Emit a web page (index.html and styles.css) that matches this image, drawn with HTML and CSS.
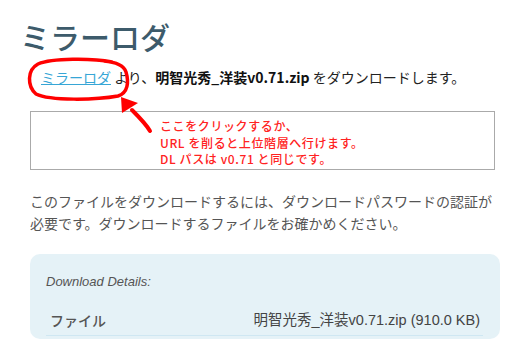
FILE: index.html
```html
<!DOCTYPE html>
<html lang="ja">
<head>
    <meta charset="UTF-8">
    <meta name="viewport" content="width=device-width, initial-scale=1.0">
    <title>ミラーロダ</title>
    <link rel="stylesheet" href="styles.css">
</head>
<body>

    <div class="page">
        <h1 class="site-title">ミラーロダ</h1>

        <div class="intro">
            <a href="#" class="mirror-link">ミラーロダ</a> より、<b>明智光秀_洋装v0.71.zip</b> をダウンロードします。
        </div>

        <div class="note-box">
            <div class="note-text">
                ここをクリックするか、<br>
                URL を削ると上位階層へ行けます。<br>
                DL パスは v0.71 と同じです。
            </div>
        </div>

        <p class="desc">
            このファイルをダウンロードするには、ダウンロードパスワードの認証が<br>
            必要です。ダウンロードするファイルをお確かめください。
        </p>

        <div class="details">
            <div class="details-title">Download Details:</div>
            <div class="details-row">
                <span class="details-label">ファイル</span>
                <span class="details-value">明智光秀_洋装v0.71.zip (910.0 KB)</span>
            </div>
        </div>
    </div>

    <!-- 手描きの注釈（丸と矢印） -->
    <svg class="annotation" width="506" height="339" viewBox="0 0 506 339">
        <path d="M112,62 C92,58 52,58 38,64 C27,70 27,86 36,94 C50,101 96,100 118,96 C128,93 129,82 126,72 C124,66 116,62 104,61"
              fill="none" stroke="#f00" stroke-width="3.5" stroke-linecap="round"/>
        <path d="M150,131 C146,124 140,118 132,110" fill="none" stroke="#f00" stroke-width="4" stroke-linecap="round"/>
        <polygon points="121,97 138,103 122,113" fill="#f00"/>
    </svg>

</body>
</html>
```

FILE: styles.css
```css
body {
    margin: 0;
    font-family: "Noto Sans CJK JP", "Liberation Sans", sans-serif;
    color: #333;
    background: #fff;
}
.page {
    width: 470px;
    margin-left: 30px;
}
.site-title {
    margin: 16px 0 0 -10px;
    font-size: 30px;
    line-height: 40px;
    font-weight: 500;
    color: #3d5b6b;
}
.intro {
    margin-top: 10px;
    padding-left: 11px;
    font-size: 14px;
    line-height: 22px;
    color: #222;
}
.intro b {
    color: #111;
}
.mirror-link {
    color: #37a6d6;
    text-decoration: underline;
}
.note-box {
    width: 465px;
    margin-top: 23px;
    border: 1px solid #aaa;
    box-sizing: border-box;
    height: 59px;
    padding: 6px 0 0 129px;
}
.note-text {
    font-size: 12px;
    line-height: 16.5px;
    letter-spacing: 0.6px;
    font-weight: 500;
    color: #f22;
}
.desc {
    margin: 20px 0 0 0;
    font-size: 14px;
    line-height: 22px;
    color: #555;
}
.details {
    margin-top: 20px;
    background: #e5f2f7;
    border-radius: 10px;
    padding: 20px 17px 0 16px;
    height: 85px;
    box-sizing: border-box;
}
.details-title {
    font-family: "Liberation Sans", sans-serif;
    font-style: italic;
    font-size: 13px;
    line-height: 16px;
    color: #555;
}
.details-row {
    display: flex;
    justify-content: space-between;
    align-items: center;
    margin-top: 11px;
    padding: 8px 3px 4px 4px;
    line-height: 22px;
    border-bottom: 1px solid #cfe7f2;
}
.details-label {
    font-size: 14px;
    font-weight: 500;
    color: #555;
}
.details-value {
    font-family: "Liberation Sans", "Noto Sans CJK JP", sans-serif;
    font-size: 14.5px;
    color: #444;
}
.annotation {
    position: absolute;
    top: 0;
    left: 0;
    pointer-events: none;
}
```
